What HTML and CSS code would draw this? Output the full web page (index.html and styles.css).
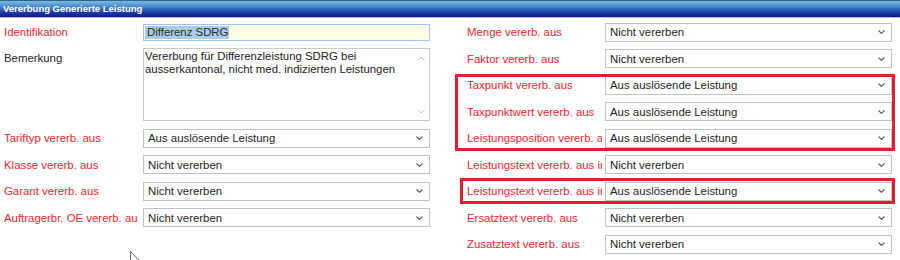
FILE: index.html
```html
<!DOCTYPE html>
<html lang="de">
<head>
<meta charset="utf-8">
<title>Vererbung Generierte Leistung</title>
<link rel="stylesheet" href="styles.css">
</head>
<body>
<div class="page">
  <div class="titlebar">Vererbung Generierte Leistung</div>
  <div class="form">
    <div class="col left">
      <label class="lbl req">Identifikation</label>
      <div class="field focus"><span class="sel">Differenz SDRG</span></div>

      <label class="lbl lbl-tall">Bemerkung</label>
      <div class="memo">
        <div class="memo-text">Vererbung für Differenzleistung SDRG bei ausserkantonal, nicht med. indizierten Leistungen</div>
        <div class="memo-scroll">
          <svg class="chev" width="8" height="5" viewBox="0 0 8 5"><path d="M0.5 4.5 L4 1 L7.5 4.5" fill="none" stroke="#c4c4c4" stroke-width="1"/></svg>
          <svg class="chev" width="8" height="5" viewBox="0 0 8 5"><path d="M0.5 0.5 L4 4 L7.5 0.5" fill="none" stroke="#c4c4c4" stroke-width="1"/></svg>
        </div>
      </div>

      <label class="lbl req">Tariftyp vererb. aus</label>
      <div class="dd"><select><option>Aus auslösende Leistung</option></select><svg class="arrow" width="7" height="4" viewBox="0 0 7 4"><path d="M0.5 0.5 L3.5 3.3 L6.5 0.5" fill="none" stroke="#555" stroke-width="1.1"/></svg></div>
      <label class="lbl req">Klasse vererb. aus</label>
      <div class="dd"><select><option>Nicht vererben</option></select><svg class="arrow" width="7" height="4" viewBox="0 0 7 4"><path d="M0.5 0.5 L3.5 3.3 L6.5 0.5" fill="none" stroke="#555" stroke-width="1.1"/></svg></div>
      <label class="lbl req">Garant vererb. aus</label>
      <div class="dd"><select><option>Nicht vererben</option></select><svg class="arrow" width="7" height="4" viewBox="0 0 7 4"><path d="M0.5 0.5 L3.5 3.3 L6.5 0.5" fill="none" stroke="#555" stroke-width="1.1"/></svg></div>
      <label class="lbl req">Auftragerbr. OE vererb. aus</label>
      <div class="dd"><select><option>Nicht vererben</option></select><svg class="arrow" width="7" height="4" viewBox="0 0 7 4"><path d="M0.5 0.5 L3.5 3.3 L6.5 0.5" fill="none" stroke="#555" stroke-width="1.1"/></svg></div>
    </div>

    <div class="col right">
      <label class="lbl req">Menge vererb. aus</label>
      <div class="dd"><select><option>Nicht vererben</option></select><svg class="arrow" width="7" height="4" viewBox="0 0 7 4"><path d="M0.5 0.5 L3.5 3.3 L6.5 0.5" fill="none" stroke="#555" stroke-width="1.1"/></svg></div>
      <label class="lbl req">Faktor vererb. aus</label>
      <div class="dd"><select><option>Nicht vererben</option></select><svg class="arrow" width="7" height="4" viewBox="0 0 7 4"><path d="M0.5 0.5 L3.5 3.3 L6.5 0.5" fill="none" stroke="#555" stroke-width="1.1"/></svg></div>
      <label class="lbl req">Taxpunkt vererb. aus</label>
      <div class="dd"><select><option>Aus auslösende Leistung</option></select><svg class="arrow" width="7" height="4" viewBox="0 0 7 4"><path d="M0.5 0.5 L3.5 3.3 L6.5 0.5" fill="none" stroke="#555" stroke-width="1.1"/></svg></div>
      <label class="lbl req">Taxpunktwert vererb. aus</label>
      <div class="dd"><select><option>Aus auslösende Leistung</option></select><svg class="arrow" width="7" height="4" viewBox="0 0 7 4"><path d="M0.5 0.5 L3.5 3.3 L6.5 0.5" fill="none" stroke="#555" stroke-width="1.1"/></svg></div>
      <label class="lbl req">Leistungsposition vererb. aus</label>
      <div class="dd"><select><option>Aus auslösende Leistung</option></select><svg class="arrow" width="7" height="4" viewBox="0 0 7 4"><path d="M0.5 0.5 L3.5 3.3 L6.5 0.5" fill="none" stroke="#555" stroke-width="1.1"/></svg></div>
      <label class="lbl req">Leistungstext vererb. aus intern</label>
      <div class="dd"><select><option>Nicht vererben</option></select><svg class="arrow" width="7" height="4" viewBox="0 0 7 4"><path d="M0.5 0.5 L3.5 3.3 L6.5 0.5" fill="none" stroke="#555" stroke-width="1.1"/></svg></div>
      <label class="lbl req">Leistungstext vererb. aus intern</label>
      <div class="dd"><select><option>Aus auslösende Leistung</option></select><svg class="arrow" width="7" height="4" viewBox="0 0 7 4"><path d="M0.5 0.5 L3.5 3.3 L6.5 0.5" fill="none" stroke="#555" stroke-width="1.1"/></svg></div>
      <label class="lbl req">Ersatztext vererb. aus</label>
      <div class="dd"><select><option>Nicht vererben</option></select><svg class="arrow" width="7" height="4" viewBox="0 0 7 4"><path d="M0.5 0.5 L3.5 3.3 L6.5 0.5" fill="none" stroke="#555" stroke-width="1.1"/></svg></div>
      <label class="lbl req">Zusatztext vererb. aus</label>
      <div class="dd"><select><option>Nicht vererben</option></select><svg class="arrow" width="7" height="4" viewBox="0 0 7 4"><path d="M0.5 0.5 L3.5 3.3 L6.5 0.5" fill="none" stroke="#555" stroke-width="1.1"/></svg></div>
    </div>
  </div>

  <div class="mark mark-a"></div>
  <div class="mark mark-b"></div>

  <svg class="cursor" width="13" height="20" viewBox="0 0 13 20"><path d="M0.5 0.5 L0.5 16 L4.3 12.4 L7 18.6 L9.2 17.6 L6.6 11.6 L11.6 11.6 Z" fill="#fff" stroke="#6a6a6a" stroke-width="1"/></svg>
</div>
</body>
</html>
```
FILE: styles.css
```css
* { box-sizing: border-box; }

html, body {
  margin: 0;
  padding: 0;
  background: #fff;
}

body {
  font-family: "Liberation Sans", Arial, sans-serif;
  font-size: 11.4px;
  color: #222;
}

.page {
  position: relative;
  width: 900px;
  height: 260px;
  overflow: hidden;
}

.titlebar {
  height: 18px;
  padding-left: 3px;
  border-top: 1px solid #2d6585;
  border-bottom: 1px solid #bcbce8;
  background: linear-gradient(#7cbce2 0%, #4a8ad0 35%, #1d3fa8 70%, #0b1a86 100%);
  color: #fff;
  font-weight: bold;
  font-size: 9.5px;
  line-height: 15px;
  white-space: nowrap;
}

.form {
  display: flex;
  gap: 37px;
  padding: 1px 0 0 4px;
}

.col {
  display: grid;
  grid-template-columns: 134px 287px;
  grid-auto-rows: 26.5px;
  column-gap: 5px;
}

.col.right {
  grid-template-columns: 135px 287px;
  column-gap: 3px;
}

.lbl {
  align-self: center;
  white-space: nowrap;
  overflow: hidden;
  color: #1e1e1e;
}

.lbl.req {
  color: #f3262e;
}

.lbl-tall {
  grid-row: span 3;
  align-self: start;
  margin-top: 6.5px;
}

.field {
  align-self: center;
  height: 17px;
  padding: 1px 0 0 1px;
  border: 1px solid #9ec6ea;
  background: #fffee2;
  color: #2a2a2a;
  line-height: 13px;
  white-space: nowrap;
}

.sel {
  display: inline-block;
  padding: 0 1px 0 2px;
  background: #a9cde9;
}

.memo {
  grid-row: span 3;
  align-self: start;
  margin-top: 2.5px;
  height: 73px;
  display: flex;
  border: 1px solid #c9c9c9;
  background: #fff;
}

.memo-text {
  flex: 1;
  padding: 1px 2px 0 1px;
  line-height: 13px;
  color: #222;
}

.memo-scroll {
  width: 17px;
  display: flex;
  flex-direction: column;
  justify-content: space-between;
  align-items: center;
  padding: 7px 0 6px;
}

.chev { display: block; }

.dd {
  align-self: center;
  display: grid;
  height: 19px;
  width: 287px;
}

.dd select,
.dd .arrow {
  grid-area: 1 / 1;
}

.dd select {
  -webkit-appearance: none;
  appearance: none;
  width: 100%;
  height: 19px;
  margin: 0;
  padding: 0 0 0 4px;
  border: 1px solid #c2c2c2;
  border-radius: 0;
  background: #fff;
  color: #1e1e1e;
  font-family: "Liberation Sans", Arial, sans-serif;
  font-size: 11.4px;
}

.dd .arrow {
  justify-self: end;
  align-self: center;
  margin-right: 7px;
  pointer-events: none;
}

.mark {
  position: absolute;
  border: 3px solid #e41e2c;
}

.mark-a {
  left: 455px;
  top: 74px;
  width: 440px;
  height: 77px;
}

.mark-b {
  left: 460px;
  top: 178px;
  width: 435px;
  height: 26px;
}

.cursor {
  position: absolute;
  left: 130px;
  top: 251px;
}
```
